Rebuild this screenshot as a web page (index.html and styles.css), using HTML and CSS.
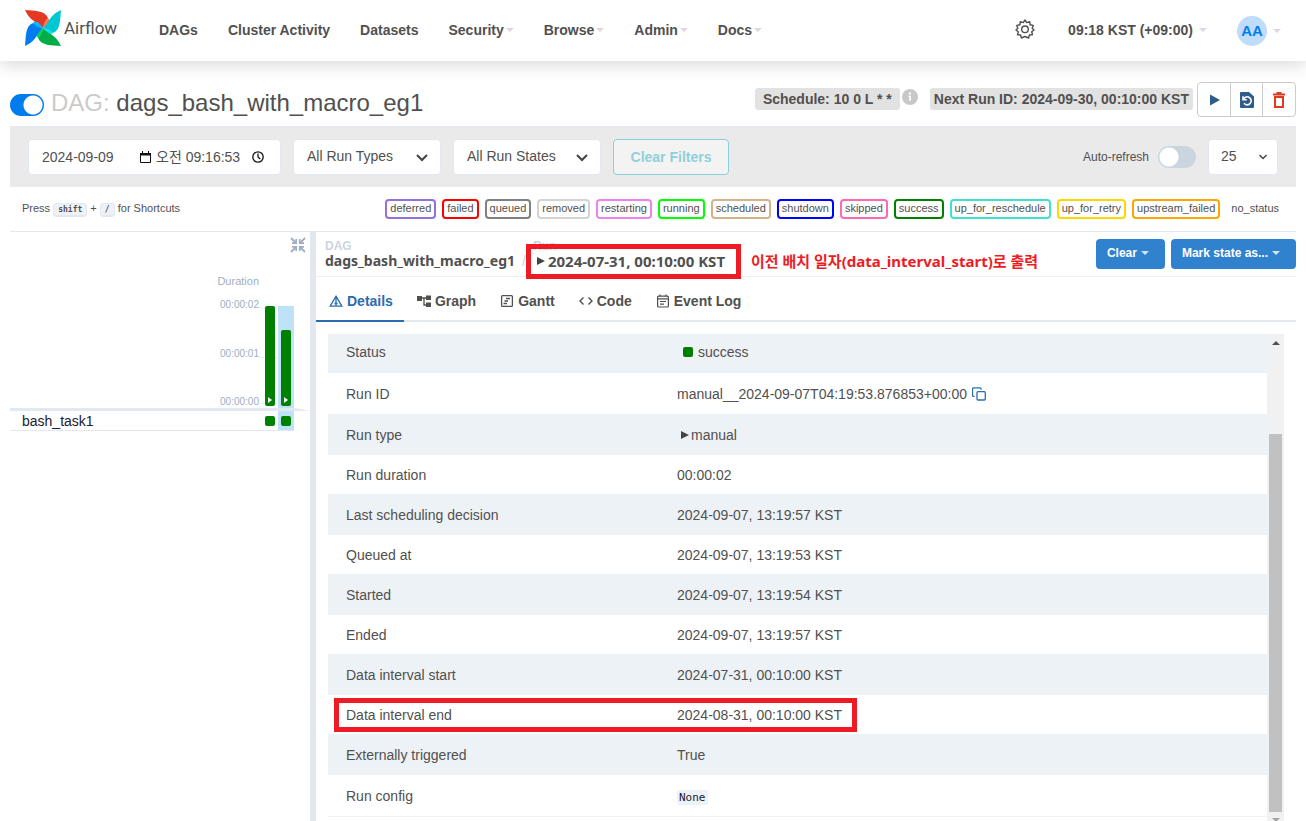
FILE: index.html
```
<!DOCTYPE html>
<html lang="ko">
<head>
<meta charset="utf-8">
<title>dags_bash_with_macro_eg1 - Grid - Airflow</title>
<link rel="stylesheet" href="styles.css">
</head>
<body>
<header class="navbar">
  <a class="brand" href="#">
    <svg class="brand-logo" viewBox="0 0 36 36" aria-hidden="true">
      <g><path fill="#e43921" d="M0 0C9 1 20 0 23 8C21 11 20 14 18 18C14 12 6 13 0 0z"/><path fill="#ff7557" d="M23 8C26 11 24 14 18 18C18 14 20 10 23 8z"/></g>
      <g transform="rotate(90 18 18)"><path fill="#00c7d4" d="M0 0C9 1 20 0 23 8C21 11 20 14 18 18C14 12 6 13 0 0z"/><path fill="#11e1ee" d="M23 8C26 11 24 14 18 18C18 14 20 10 23 8z"/></g>
      <g transform="rotate(180 18 18)"><path fill="#00ad46" d="M0 0C9 1 20 0 23 8C21 11 20 14 18 18C14 12 6 13 0 0z"/><path fill="#04d659" d="M23 8C26 11 24 14 18 18C18 14 20 10 23 8z"/></g>
      <g transform="rotate(270 18 18)"><path fill="#017cee" d="M0 0C9 1 20 0 23 8C21 11 20 14 18 18C14 12 6 13 0 0z"/><path fill="#0cb6ff" d="M23 8C26 11 24 14 18 18C18 14 20 10 23 8z"/></g>
    </svg>
    <span class="brand-name">Airflow</span>
  </a>
  <nav class="menu">
    <a href="#">DAGs</a>
    <a href="#">Cluster Activity</a>
    <a href="#">Datasets</a>
    <a href="#">Security<i class="caret"></i></a>
    <a href="#">Browse<i class="caret"></i></a>
    <a href="#">Admin<i class="caret"></i></a>
    <a href="#">Docs<i class="caret"></i></a>
  </nav>
  <div class="menu-right">
    <button class="plain gear" type="button" aria-label="Settings">
      <svg width="20" height="20" viewBox="0 0 20 20" fill="none" stroke="#51504f" stroke-width="1.4" stroke-linejoin="round"><path d="M10 1l1.700 2.600 3-.9.4 3.100 3.100.6-1 2.900L19 11l-2.300 1.800.8 2.900-3.100.3-.8 3L10 17.500 6.400 19l-.8-3-3.100-.3.8-2.900L1 11l1.800-1.700-1-2.900 3.100-.6.4-3.100 3 .9z"/><circle cx="10" cy="10.300" r="3.300"/></svg>
    </button>
    <a class="clock" href="#">09:18 KST (+09:00)<i class="caret caret-far"></i></a>
    <a class="user" href="#"><span class="avatar">AA</span><i class="caret caret-far"></i></a>
  </div>
</header>

<main class="page">
  <section class="title-row">
    <label class="pause"><input type="checkbox" checked aria-label="Pause or unpause DAG"></label>
    <h1><span class="muted">DAG:</span> dags_bash_with_macro_eg1</h1>
    <div class="title-info">
      <span class="tag tag-schedule">Schedule: 10 0 L * *</span>
      <svg class="info" viewBox="0 0 16 16" aria-hidden="true"><circle cx="8" cy="8" r="8" fill="#c8c8c8"/><path fill="#fff" d="M7 3.500h2v2H7zM6.500 6.700H9v5H7.300V8H6.500z"/></svg>
      <span class="tag tag-next">Next Run ID: 2024-09-30, 00:10:00 KST</span>
      <div class="btn-group">
        <button type="button" aria-label="Trigger DAG"><svg width="16" height="16" viewBox="0 0 16 16"><path fill="#2f5d8a" d="M4 2.500l10 5.500-10 5.500z"/></svg></button>
        <button type="button" aria-label="Refresh"><svg width="16" height="18" viewBox="0 0 16 18"><path fill="#2f5d8a" d="M1 2a1 1 0 0 1 1-1h8l5 4.500V16a1 1 0 0 1-1 1H2a1 1 0 0 1-1-1z"/><path fill="none" stroke="#fff" stroke-width="1.600" d="M4.500 8.200A4 4 0 1 1 5 12.300M4 5.300v3.500h3.800"/></svg></button>
        <button type="button" aria-label="Delete DAG"><svg width="16" height="18" viewBox="0 0 16 18"><path fill="none" stroke="#e43921" stroke-width="2" d="M2 3.500h12M5.500 2h5M4 6h8v10H4z"/></svg></button>
      </div>
    </div>
  </section>

  <section class="filters">
    <div class="datetime">
      <input class="date" type="text" value="2024-09-09" aria-label="Base date">
      <svg width="11" height="12" viewBox="0 0 11 12" aria-hidden="true"><path fill="none" stroke="#111" d="M.5 2.500h10v9H.5zM2.500 0v2M8.500 0v2"/><path fill="#111" d="M0 2h11v2.500H0z"/></svg>
      <input class="time" type="text" value="오전 09:16:53" aria-label="Base time">
      <svg width="12" height="12" viewBox="0 0 12 12" fill="none" stroke="#111" stroke-width="1.300" aria-hidden="true"><circle cx="6" cy="6" r="5.200"/><path d="M6 2.500V6l2.300 2"/></svg>
    </div>
    <div class="select">
      <select aria-label="Run types"><option>All Run Types</option></select>
      <svg width="12" height="8" viewBox="0 0 12 8"><path fill="none" stroke="#444" stroke-width="2" d="M1 1l5 5 5-5"/></svg>
    </div>
    <div class="select">
      <select aria-label="Run states"><option>All Run States</option></select>
      <svg width="12" height="8" viewBox="0 0 12 8"><path fill="none" stroke="#444" stroke-width="2" d="M1 1l5 5 5-5"/></svg>
    </div>
    <button class="clear-filters" type="button" disabled>Clear Filters</button>
    <label class="auto"><span>Auto-refresh</span><input type="checkbox"></label>
    <div class="select select-small">
      <select aria-label="Number of runs"><option>25</option></select>
      <svg width="8" height="6" viewBox="0 0 8 6"><path fill="none" stroke="#444" stroke-width="1.500" d="M.5 1L4 4.500 7.500 1"/></svg>
    </div>
  </section>

  <section class="legend">
    <p class="shortcut">Press <kbd>shift</kbd> + <kbd>/</kbd> for Shortcuts</p>
    <ul class="states">
      <li class="deferred">deferred</li>
      <li class="failed">failed</li>
      <li class="queued">queued</li>
      <li class="removed">removed</li>
      <li class="restarting">restarting</li>
      <li class="running">running</li>
      <li class="scheduled">scheduled</li>
      <li class="shutdown">shutdown</li>
      <li class="skipped">skipped</li>
      <li class="success">success</li>
      <li class="up-for-reschedule">up_for_reschedule</li>
      <li class="up-for-retry">up_for_retry</li>
      <li class="upstream-failed">upstream_failed</li>
      <li class="no-status">no_status</li>
    </ul>
  </section>

  <section class="split">
    <aside class="grid-pane">
      <button class="plain collapse" type="button" aria-label="Hide details panel">
        <svg width="16" height="16" viewBox="0 0 16 16" fill="none" stroke="#a0aec0" stroke-width="1.800"><path d="M1 1l5 5M15 1l-5 5M1 15l5-5M15 15l-5-5"/><path d="M2 6.200h4.200V2M14 6.200H9.800V2M2 9.800h4.200V14M14 9.800H9.800V14"/></svg>
      </button>
      <div class="axis-title">Duration</div>
      <div class="chart">
        <div class="ticks"><span>00:00:02</span><span>00:00:01</span><span>00:00:00</span></div>
        <div class="runs">
          <div class="run"><div class="bar" style="height:100px"><svg width="4" height="6" viewBox="0 0 4 6"><path fill="#fff" d="M0 0l4 3-4 3z"/></svg></div></div>
          <div class="run selected"><div class="bar" style="height:76px"><svg width="4" height="6" viewBox="0 0 4 6"><path fill="#fff" d="M0 0l4 3-4 3z"/></svg></div></div>
        </div>
      </div>
      <div class="rule"></div>
      <div class="task-row">
        <span class="task-name">bash_task1</span>
        <span class="cell"><i class="square"></i></span>
        <span class="cell selected"><i class="square"></i></span>
      </div>
    </aside>

    <div class="details">
      <div class="crumbs">
        <div class="crumb"><small>DAG</small><a href="#">dags_bash_with_macro_eg1</a></div>
        <span class="slash">/</span>
        <div class="crumb crumb-run"><small>Run</small><span class="run-name"><svg width="8" height="8" viewBox="0 0 8 8"><path fill="#444" d="M0 0l8 4-8 4z"/></svg>2024-07-31, 00:10:00 KST</span><i class="mark mark-run"></i></div>
        <strong class="note">이전 배치 일자(data_interval_start)로 출력</strong>
        <div class="actions">
          <button type="button">Clear<i class="caret caret-light"></i></button>
          <button type="button">Mark state as...<i class="caret caret-light"></i></button>
        </div>
      </div>
      <div class="tabs" role="tablist">
        <button class="tab active" role="tab" type="button"><svg width="14" height="14" viewBox="0 0 14 14" fill="none" stroke="#2b6cb0" stroke-width="1.300"><path d="M7 2.200l5.800 10H1.200zM7 2v10.200M5.500 9.500h3"/></svg>Details</button>
        <button class="tab" role="tab" type="button"><svg width="14" height="14" viewBox="0 0 14 14" fill="#51504f"><path d="M0 2h5v5H0zM9 1.500h5v4.500H9zM9 8.500h5V13H9z"/><path fill="none" stroke="#51504f" stroke-width="1.300" d="M5 4h4M7 4v7h2"/></svg>Graph</button>
        <button class="tab" role="tab" type="button"><svg width="14" height="14" viewBox="0 0 14 14" fill="none" stroke="#51504f" stroke-width="1.300"><rect x="1.600" y="1.600" width="10.800" height="10.800" rx="1"/><path d="M6 4.500h4M4.500 7h3.500M3.500 9.500h3.500"/></svg>Gantt</button>
        <button class="tab" role="tab" type="button"><svg width="14" height="14" viewBox="0 0 14 14" fill="none" stroke="#51504f" stroke-width="1.400"><path d="M4.500 3.500L1 7l3.500 3.500M9.500 3.500L13 7l-3.500 3.500"/></svg>Code</button>
        <button class="tab" role="tab" type="button"><svg width="14" height="14" viewBox="0 0 14 14" fill="none" stroke="#51504f" stroke-width="1.200"><rect x="1.600" y="2.200" width="10.800" height="10.800" rx="1"/><path d="M1.600 4.800h10.800M4 .5v2M10 .5v2M4 7.500h6M4 10.200h4"/></svg>Event Log</button>
      </div>
      <div class="scroll-area">
        <table>
          <colgroup><col class="col-key"><col></colgroup>
          <tbody>
            <tr class="first"><th scope="row">Status</th><td><span class="value"><i class="square square-text"></i>success</span></td></tr>
            <tr class="tall"><th scope="row">Run ID</th><td><span class="value">manual__2024-09-07T04:19:53.876853+00:00<button class="plain" type="button" aria-label="Copy"><svg width="14" height="14" viewBox="0 0 14 14" fill="none" stroke="#2b6cb0" stroke-width="1.300"><rect x="5" y="4.700" width="8.300" height="8.300" rx="1"/><path d="M2.500 9.300h-1a1 1 0 0 1-1-1v-6.500a1 1 0 0 1 1-1h6.500a1 1 0 0 1 1 1v1"/></svg></button></span></td></tr>
            <tr><th scope="row">Run type</th><td><span class="value type"><svg width="8" height="8" viewBox="0 0 8 8"><path fill="#444" d="M0 0l8 4-8 4z"/></svg>manual</span></td></tr>
            <tr><th scope="row">Run duration</th><td>00:00:02</td></tr>
            <tr><th scope="row">Last scheduling decision</th><td>2024-09-07, 13:19:57 KST</td></tr>
            <tr><th scope="row">Queued at</th><td>2024-09-07, 13:19:53 KST</td></tr>
            <tr><th scope="row">Started</th><td>2024-09-07, 13:19:54 KST</td></tr>
            <tr><th scope="row">Ended</th><td>2024-09-07, 13:19:57 KST</td></tr>
            <tr><th scope="row">Data interval start</th><td>2024-07-31, 00:10:00 KST</td></tr>
            <tr class="marked"><th scope="row">Data interval end<i class="mark mark-row"></i></th><td>2024-08-31, 00:10:00 KST</td></tr>
            <tr><th scope="row">Externally triggered</th><td>True</td></tr>
            <tr class="tall"><th scope="row">Run config</th><td><code>None</code></td></tr>
          </tbody>
        </table>
        <div class="scrollbar" aria-hidden="true">
          <i class="arrow arrow-up"></i>
          <div class="track"><div class="thumb"></div></div>
          <i class="arrow arrow-down"></i>
        </div>
      </div>
    </div>
  </section>
</main>
</body>
</html>
```
FILE: styles.css
```
* { box-sizing: border-box; }

body {
  margin: 0;
  height: 100vh;
  overflow: hidden;
  display: flex;
  flex-direction: column;
  background: #fff;
  color: #51504f;
  font: 14px/20px "Liberation Sans", "Noto Sans CJK KR", sans-serif;
}

a { color: inherit; text-decoration: none; }
button, input, select { font: inherit; color: inherit; }
svg { flex: none; display: block; }
.plain { border: 0; padding: 0; background: none; }

/* Top navigation */
.navbar {
  flex: none;
  display: flex;
  align-items: center;
  height: 61px;
  padding: 0 25px;
  box-shadow: 0 4px 16px rgba(0, 0, 0, .15);
  font-weight: bold;
}
.brand { display: flex; align-items: center; gap: 3px; width: 134px; padding-bottom: 5px; }
.brand-logo { width: 36px; height: 36px; }
.brand-name { font: 17px/20px Roboto, sans-serif; }
.menu { display: flex; gap: 30px; padding-bottom: 2px; }
.menu a, .clock, .user { display: flex; align-items: center; }
.menu-right { margin-left: auto; display: flex; align-items: center; }
.gear { padding-bottom: 3px; }
.clock { margin-left: 33px; padding-bottom: 2px; }
.user { margin-left: 30px; }
.avatar {
  display: grid;
  place-items: center;
  width: 30px;
  height: 30px;
  border-radius: 50%;
  background: #bfdcfb;
  color: #017cee;
  font-size: 15px;
}
.caret {
  margin-left: 2px;
  border: 4px solid transparent;
  border-top-color: #e2d4e4;
  border-bottom: 0;
}
.caret-far { margin-left: 6px; }
.caret-light { margin-left: 4px; border-top-color: #cfe3f5; }

.page { flex: 1; min-height: 0; display: flex; flex-direction: column; padding: 21px 10px 0; }

/* Title */
.title-row { flex: none; display: flex; align-items: flex-start; height: 44px; }
.pause { display: flex; padding-top: 12px; }
.pause input, .auto input {
  appearance: none;
  margin: 0;
  width: 34px;
  height: 22px;
  border-radius: 11px;
  background: radial-gradient(circle at 23px 11px, #fff 9px, #017cee 10px);
}
h1 { margin: 6px 0 0 7px; font-size: 24px; line-height: 30px; font-weight: normal; }
.muted { color: #cbcbcb; }
.title-info { margin-left: auto; display: flex; align-items: flex-start; }
.tag { margin-top: 6px; border-radius: 3px; background: #e2e2e2; font-weight: bold; line-height: 22px; white-space: nowrap; }
.tag-schedule { padding: 0 8px; }
.tag-next { margin-left: 12px; padding: 0 4px; }
.info { width: 16px; height: 16px; margin: 7px 0 0 2px; }
.btn-group { display: flex; width: 99px; margin-left: 4px; border: 1px solid #ccc; border-radius: 4px; }
.btn-group button { flex: 1; display: grid; place-items: center; height: 33px; border: 0; padding: 0; background: none; }
.btn-group button + button { border-left: 1px solid #ccc; }

/* Filters */
.filters {
  flex: none;
  display: flex;
  align-items: center;
  gap: 12px;
  height: 61px;
  padding: 0 18px;
  border-top: 1px solid #e2e8f0;
  background: #eaeaea;
}
.datetime {
  display: flex;
  align-items: center;
  width: 253px;
  height: 36px;
  padding: 0 13px;
  border: 1px solid #e2e8f0;
  border-radius: 4px;
  background: #fff;
}
.datetime input { border: 0; padding: 0; background: none; }
.date { width: 98px; }
.time { width: 84px; margin: 0 12px 0 5px; }
.select { position: relative; width: 148px; height: 36px; }
.select select {
  appearance: none;
  width: 100%;
  height: 100%;
  padding: 0 32px 2px 13px;
  border: 1px solid #e2e8f0;
  border-radius: 4px;
  background: #fff;
}
.select svg { position: absolute; right: 13px; top: 15px; pointer-events: none; }
.select-small { width: 70px; }
.select-small select { padding-left: 12px; }
.select-small svg { right: 11px; }
.clear-filters {
  width: 116px;
  height: 36px;
  padding-bottom: 2px;
  border: 1px solid #8bcfdb;
  border-radius: 4px;
  background: #f3f3f3;
  color: #8fd0dc;
  font-weight: bold;
}
.auto { margin-left: auto; display: flex; align-items: center; gap: 9px; font-size: 12px; }
.auto input { width: 38px; background: radial-gradient(circle at 11px 11px, #fff 9px, #cbd5e0 10px); }

/* Legend */
.legend {
  flex: none;
  display: flex;
  align-items: center;
  justify-content: space-between;
  height: 45px;
  padding: 0 12px;
  border-bottom: 1px solid #e2e8f0;
  font-size: 11px;
}
.shortcut { margin: 0; padding-bottom: 2px; }
kbd {
  padding: 1px 4px;
  border: 1px solid #e2e8f0;
  border-bottom-width: 2px;
  border-radius: 4px;
  background: #edf2f7;
  font: bold 8px/10px "DejaVu Sans Mono", monospace;
}
.states { display: flex; gap: 6px; margin: 0; padding: 0; list-style: none; }
.states li { padding: 0 3px 1px; border: 2px solid; border-radius: 4px; line-height: 15px; }
.states .deferred { border-color: mediumpurple; }
.states .failed { border-color: red; }
.states .queued { border-color: gray; }
.states .removed { border-color: lightgrey; }
.states .restarting { border-color: violet; }
.states .running { border-color: lime; }
.states .scheduled { border-color: tan; }
.states .shutdown { border-color: blue; }
.states .skipped { border-color: hotpink; }
.states .success { border-color: green; }
.states .up-for-reschedule { border-color: turquoise; }
.states .up-for-retry { border-color: gold; }
.states .upstream-failed { border-color: orange; }
.states .no-status { border-color: transparent; }

/* Grid pane */
.split { flex: 1; min-height: 0; display: flex; }
.grid-pane { flex: none; width: 306px; border-right: 6px solid #e2e8f0; }
.collapse { display: block; margin: 5px 4px 0 auto; }
.axis-title, .ticks { color: #a0aec0; }
.axis-title { margin: 20px 51px 0 0; font-size: 11px; line-height: 16px; text-align: right; }
.chart { display: flex; justify-content: flex-end; margin-top: 17px; padding-right: 16px; }
.ticks { display: flex; flex-direction: column; justify-content: space-between; height: 109px; margin-top: -7px; font-size: 10px; line-height: 12px; }
.runs {
  display: flex;
  height: 102px;
  padding-left: 3px;
  background:
    linear-gradient(#edf2f7, #edf2f7) 0 1px / 100% 1px no-repeat,
    linear-gradient(#edf2f7, #edf2f7) 0 51px / 100% 1px no-repeat,
    linear-gradient(#edf2f7, #edf2f7) 0 97px / 100% 1px no-repeat;
}
.run { display: flex; align-items: flex-end; width: 16px; padding: 0 3px 2px; }
.selected { background: #bee3f8; }
.bar { display: flex; align-items: flex-end; justify-content: center; width: 10px; padding-bottom: 3px; border-radius: 2px; background: green; }
.rule { height: 3px; background: #e2e8f0; clip-path: polygon(0 0, 95% 0, 100% 100%, 0 100%); }
.task-row { display: flex; align-items: center; height: 20px; margin-right: 16px; border-bottom: 1px solid #e2e8f0; }
.task-name { flex: 1; padding-left: 12px; color: #1a202c; }
.cell { display: grid; place-items: center; width: 16px; height: 19px; }
.square { display: block; width: 10px; height: 10px; border-radius: 2px; background: green; }

/* Details pane */
.details { flex: 1; min-width: 0; display: flex; flex-direction: column; }
.crumbs {
  flex: none;
  display: flex;
  align-items: flex-start;
  height: 45px;
  padding-left: 9px;
  border-bottom: 1px solid #edf2f7;
}
.crumb { display: flex; flex-direction: column; padding-top: 8px; font: bold 14px/16px "Noto Sans", sans-serif; white-space: nowrap; }
.crumb small { color: #cbd5e0; font: bold 12px/13px "Liberation Sans", sans-serif; }
.slash { margin: 19px 7px 0; color: #cbd5e0; }
.crumb-run { position: relative; font-size: 15px; }
.run-name { display: flex; align-items: center; gap: 3px; padding-left: 4px; }
.mark { position: absolute; border: 5px solid #ed1c24; pointer-events: none; }
.mark-run { inset: 12px -16px -10px -7px; }
.note { margin: 19px 0 0 26px; color: #ed1c24; font: bold 15px/20px "Noto Sans", "Noto Sans CJK KR", sans-serif; white-space: nowrap; }
.actions { margin-left: auto; display: flex; gap: 6px; padding-top: 7px; }
.actions button {
  display: flex;
  align-items: center;
  height: 30px;
  padding: 0 16px 2px 11px;
  border: 0;
  border-radius: 4px;
  background: #3182ce;
  color: #fff;
  font-size: 12px;
  font-weight: bold;
}

.tabs { flex: none; display: flex; height: 45px; border-bottom: 2px solid #e2e8f0; }
.tab {
  display: flex;
  align-items: center;
  gap: 4px;
  height: 45px;
  padding: 4px 11px 0 13px;
  border: 0;
  border-bottom: 2px solid transparent;
  background: none;
  font-weight: bold;
}
.active { border-color: #2b6cb0; color: #2b6cb0; }

.scroll-area { flex: 1; min-height: 0; display: flex; align-items: flex-start; margin: 12px 12px 0; overflow: hidden; }
table { flex: 1; margin-top: -2px; table-layout: fixed; border-collapse: separate; border-spacing: 0; }
.col-key { width: 331px; }
tr { height: 40px; }
.first { height: 41px; }
.tall { height: 42px; }
tr:nth-child(odd) { background: #edf2f7; }
th, td { padding: 0 18px; border-bottom: 1px solid #edf2f7; font-weight: normal; text-align: left; }
.value { display: flex; align-items: center; gap: 5px; }
.type { gap: 2px; padding-left: 4px; }
.square-text { margin-left: 6px; }
.marked { position: relative; }
.mark-row { left: 6px; top: 3px; width: 523px; height: 34px; }
code { padding: 1px 2px; border-radius: 2px; background: #edf2f7; color: #1a202c; font: 11px/14px "DejaVu Sans Mono", monospace; }

.scrollbar { align-self: stretch; flex: none; display: flex; flex-direction: column; align-items: center; width: 17px; background: #f1f1f1; }
.arrow { border: 4px solid transparent; }
.arrow-up { margin-top: 3px; border-bottom-color: #505050; }
.track { flex: 1; display: flex; flex-direction: column; justify-content: flex-end; }
.thumb { width: 13px; height: 81%; background: #c1c1c1; }
.arrow-down { margin-top: 6px; margin-bottom: -5px; border-top-color: #a3a3a3; }
```
